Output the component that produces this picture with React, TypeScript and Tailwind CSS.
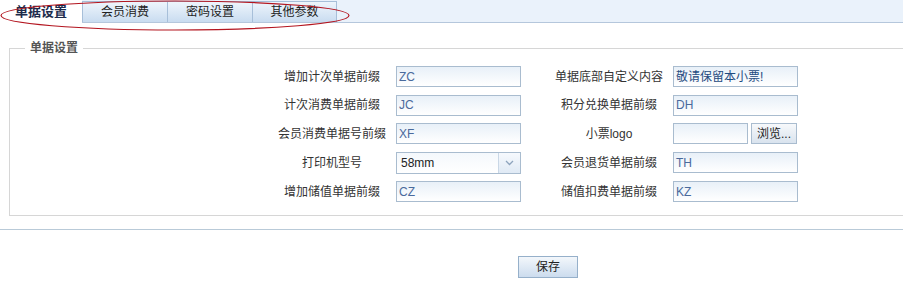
import React from "react";

const LEFT = [
  { label: "增加计次单据前缀", value: "ZC" },
  { label: "计次消费单据前缀", value: "JC" },
  { label: "会员消费单据号前缀", value: "XF" },
  { label: "打印机型号", value: "58mm", select: true },
  { label: "增加储值单据前缀", value: "CZ" },
];

const RIGHT = [
  { label: "单据底部自定义内容", value: "敬请保留本小票!", dark: true },
  { label: "积分兑换单据前缀", value: "DH" },
  { label: "小票logo", value: "", file: true },
  { label: "会员退货单据前缀", value: "TH" },
  { label: "储值扣费单据前缀", value: "KZ" },
];

const TABS = ["会员消费", "密码设置", "其他参数"];

const FONT = { fontFamily: '"Liberation Sans", "Noto Sans CJK SC", sans-serif' };

function TextBox({ value, dark, width = "w-[125px]" }: { value: string; dark?: boolean; width?: string }) {
  return (
    <div
      className={`${width} h-[21px] border border-[#a9bccf] bg-gradient-to-b from-[#e8f0f8] to-white flex items-center px-[2px] text-[12px] leading-none ${
        dark ? "text-[#1f4a80]" : "text-[#4a6a9c]"
      }`}
    >
      {value}
    </div>
  );
}

function SelectBox({ value }: { value: string }) {
  return (
    <div className="w-[125px] h-[22px] border border-[#a9bccf] bg-gradient-to-b from-[#f4f8fc] to-white flex">
      <div className="flex-1 flex items-center px-[4px] text-[12px] text-[#222]">{value}</div>
      <div className="w-[22px] border-l border-[#c9d7e6] bg-gradient-to-b from-[#f6f9fd] to-[#e0eaf5] flex items-center justify-center">
        <svg width="9" height="6" viewBox="0 0 9 6">
          <polyline points="1,1 4.5,4.5 8,1" fill="none" stroke="#8ea4bd" strokeWidth="1.3" />
        </svg>
      </div>
    </div>
  );
}

function FileBox() {
  return (
    <div className="flex gap-[3px]">
      <TextBox value="" width="w-[75px]" />
      <button className="w-[46px] h-[21px] border border-[#a9bccf] bg-gradient-to-b from-[#f7f9fb] to-[#d9e3ee] text-[12px] text-[#222] leading-none">
        浏览...
      </button>
    </div>
  );
}

export default function App() {
  return (
    <div className="relative w-[903px] h-[293px] overflow-hidden bg-white text-[#333]" style={FONT}>
      {/* Tabs */}
      <div className="h-[23px] bg-[#eaf2fb] border-b border-[#b5c7dc] flex items-end">
        <div className="w-[82px] h-[23px] -mb-px bg-white flex items-center justify-center text-[13px] font-bold text-[#1c2b4b]">
          单据设置
        </div>
        {TABS.map((t, i) => (
          <div
            key={t}
            className={`w-[85px] h-[21px] border-t border-l border-[#a7bfd9] ${
              i === TABS.length - 1 ? "border-r" : ""
            } bg-gradient-to-b from-[#eef5fc] to-[#c9dcf0] flex items-center justify-center text-[12px] text-[#222]`}
          >
            {t}
          </div>
        ))}
      </div>

      {/* Fieldset */}
      <fieldset className="ml-[9px] mt-[18px] w-[920px] border border-[#d6d6d6] pl-[15px] pt-[11px] pb-[13px]">
        <legend className="px-[5px] text-[12px] leading-[14px] font-bold text-[#555]">单据设置</legend>
        <div className="ml-[243px] grid grid-cols-[128px_149px_128px_125px] gap-y-[7.5px] items-center">
          {LEFT.map((l, i) => {
            const r = RIGHT[i];
            return (
              <React.Fragment key={l.label}>
                <div className="text-center text-[12px] text-[#333]">{l.label}</div>
                <div>{l.select ? <SelectBox value={l.value} /> : <TextBox value={l.value} />}</div>
                <div className="text-center text-[12px] text-[#333]">{r.label}</div>
                <div>{r.file ? <FileBox /> : <TextBox value={r.value} dark={r.dark} />}</div>
              </React.Fragment>
            );
          })}
        </div>
      </fieldset>

      <div className="mt-[13px] border-t border-[#b9cad8]" />

      <div className="mt-[24px] ml-[518px]">
        <button className="w-[60px] h-[22px] border border-[#96b0ca] bg-gradient-to-b from-[#f3f7fb] to-[#ccdcee] text-[12px] text-[#222]">
          保存
        </button>
      </div>

      {/* red annotation ellipse */}
      <svg className="absolute left-0 top-0 pointer-events-none" width="360" height="34" viewBox="0 0 360 34">
        <ellipse cx="175" cy="15.5" rx="174" ry="14.5" fill="none" stroke="#b3151f" strokeWidth="1.2" />
      </svg>
    </div>
  );
}
